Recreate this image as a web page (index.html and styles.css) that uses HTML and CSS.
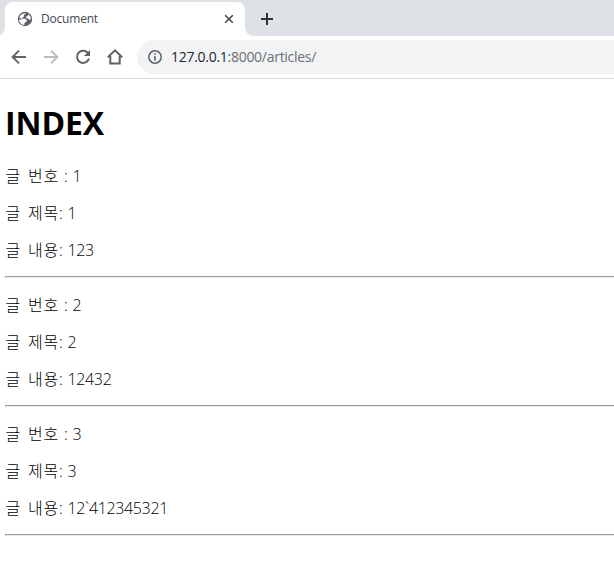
FILE: index.html
```html
<!DOCTYPE html>
<html lang="ko">
<head>
<meta charset="utf-8">
<title>Document</title>
<link rel="stylesheet" href="styles.css">
</head>
<body>
<header class="browser">
  <div class="tabs">
    <div class="tab">
      <svg class="globe" viewBox="0 0 16 16"><circle cx="8" cy="8" r="7.200" fill="#5f6368"/><path d="M9.200 2.200 6.800 4 7.200 5.600 5.200 6.600 5.500 7.800h3l1.300 1.700-.5 1.500-1.700.6-.3 2.300C4.300 13.700 2.100 11.300 2 8.200l1.800.6 1.500-.6L2.300 6.500C3 4 5.400 2 9.200 2.200zM11.200 3.200c1.600 1 2.700 2.700 2.700 4.800l-1.500.9-1.200-1.300-1.900-.3-.3-1.500 1.800-.8z" fill="#fff"/></svg>
      <span class="tab-title">Document</span>
      <svg class="close" viewBox="0 0 10 10"><path d="M1.200 1.200l7.600 7.600M8.800 1.200L1.200 8.800" stroke="#45484c" stroke-width="1.600"/></svg>
    </div>
    <svg class="plus" viewBox="0 0 12 12"><path d="M6 0v12M0 6h12" stroke="#303236" stroke-width="2"/></svg>
  </div>
  <div class="toolbar">
    <svg class="nav" viewBox="0 0 16 16"><path d="M15 8H2M8 1.600L1.600 8 8 14.400" fill="none" stroke="#5f6368" stroke-width="2"/></svg>
    <svg class="nav" viewBox="0 0 16 16"><path d="M1 8h13M8 1.600L14.400 8 8 14.400" fill="none" stroke="#babcbe" stroke-width="2"/></svg>
    <svg class="nav" viewBox="0 0 16 16"><path d="M13.300 4.500A6.100 6.100 0 1 0 14 9.500" fill="none" stroke="#5f6368" stroke-width="2"/><path d="M15 1v6H9z" fill="#5f6368"/></svg>
    <svg class="nav" viewBox="0 0 16 16"><path d="M.8 8.300L8 1.400l7.200 6.900M3.300 7v7.500h9.400V7" fill="none" stroke="#5f6368" stroke-width="2"/></svg>
    <div class="address">
      <svg class="info" viewBox="0 0 14 14"><circle cx="7" cy="7" r="6.200" fill="none" stroke="#5f6368" stroke-width="1.500"/><path d="M7 3.300v1.500M7 6v4.700" stroke="#5f6368" stroke-width="1.600"/></svg>
      <span class="url"><span class="host">127.0.0.1</span>:8000/articles/</span>
    </div>
  </div>
</header>
<main class="page">
  <h1>INDEX</h1>
  <p><span class="ko">글 번호</span> : 1</p>
  <p><span class="ko">글 제목</span>: 1</p>
  <p><span class="ko">글 내용</span>: 123</p>
  <hr>
  <p><span class="ko">글 번호</span> : 2</p>
  <p><span class="ko">글 제목</span>: 2</p>
  <p><span class="ko">글 내용</span>: 12432</p>
  <hr>
  <p><span class="ko">글 번호</span> : 3</p>
  <p><span class="ko">글 제목</span>: 3</p>
  <p><span class="ko">글 내용</span>: 12`412345321</p>
  <hr>
</main>
</body>
</html>
```
FILE: styles.css
```css
body {
  margin: 0;
  background: #fff;
  color: #000;
  font-family: "Open Sans", "Noto Sans CJK KR", sans-serif;
  overflow: hidden;
}
svg { display: block; flex: none; }
.tabs {
  display: flex;
  align-items: center;
  height: 36px;
  padding-left: 5px;
  background: #dee1e6;
}
.tab {
  position: relative;
  display: flex;
  align-items: center;
  align-self: flex-end;
  box-sizing: border-box;
  width: 240px;
  height: 34px;
  padding: 0 11px 0 12px;
  background: #fff;
  border-radius: 8px 8px 0 0;
}
.tab::before,
.tab::after {
  content: "";
  position: absolute;
  bottom: 0;
  width: 8px;
  height: 8px;
}
.tab::before {
  left: -8px;
  background: radial-gradient(circle at 0 0, #dee1e6 7.500px, #fff 8px);
}
.tab::after {
  right: -8px;
  background: radial-gradient(circle at 100% 0, #dee1e6 7.500px, #fff 8px);
}
.globe { width: 16px; height: 16px; }
.tab-title {
  flex: 1;
  margin-left: 8px;
  font-size: 12px;
  line-height: 16px;
  letter-spacing: -0.200px;
  color: #45484c;
}
.close { width: 10px; height: 10px; }
.plus { width: 12px; height: 12px; margin: 2px 0 0 16px; }
.toolbar {
  display: flex;
  align-items: center;
  height: 42px;
  padding-left: 11px;
  border-bottom: 1px solid #d9dbde;
}
.nav { width: 16px; height: 16px; margin-right: 16px; }
.address {
  display: flex;
  flex: 1;
  align-items: center;
  height: 34px;
  margin-left: -2px;
  padding-left: 11px;
  border-radius: 17px 0 0 17px;
  background: #f1f3f4;
}
.info { width: 14px; height: 14px; }
.url {
  margin-left: 9px;
  font-size: 14px;
  line-height: 20px;
  letter-spacing: -0.280px;
  color: #6b6f73;
}
.host { color: #25272a; }
.page {
  display: flow-root;
  padding-left: 5px;
}
h1 {
  margin: 22.440px 0 21.440px;
  font-size: 32px;
  font-weight: 680;
  line-height: 43px;
  letter-spacing: -0.100px;
}
p {
  margin: 16px 0;
  padding-left: 0.600px;
  font-size: 16px;
  font-weight: 350;
  line-height: 21px;
  letter-spacing: -0.350px;
  word-spacing: 1.200px;
}
.ko {
  font-family: "Noto Sans CJK KR", sans-serif;
  font-size: 16px;
  font-weight: 300;
  line-height: 1;
  letter-spacing: 0.800px;
  word-spacing: 1.600px;
}
hr {
  height: 0;
  margin: -1px 0 17px;
  border: solid;
  border-width: 1px 0 1px 1px;
  border-color: #9a9a9a #eee #eee #9a9a9a;
}
```
